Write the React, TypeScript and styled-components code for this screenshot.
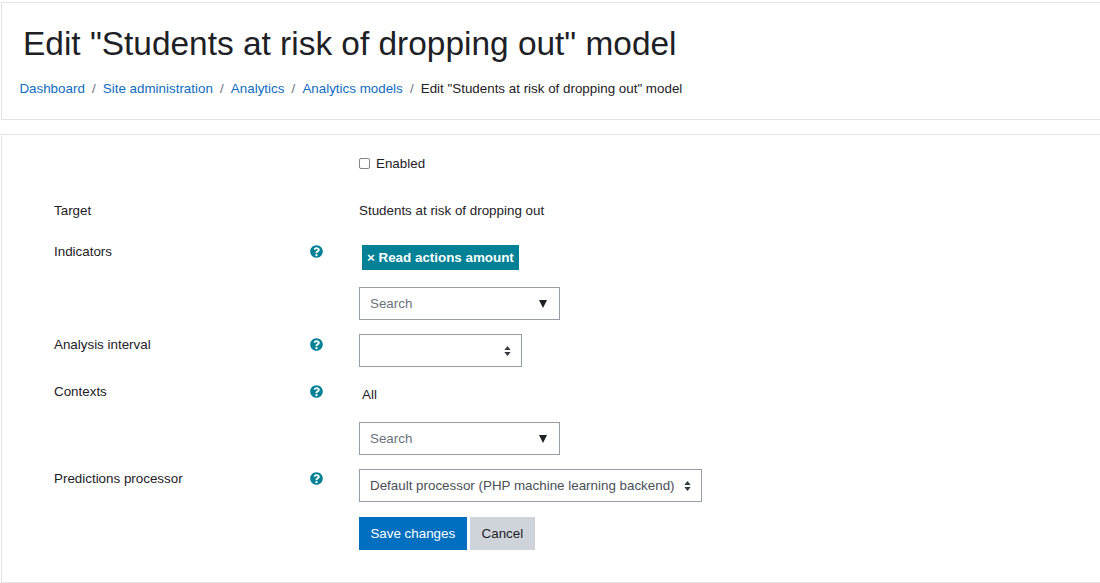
import styled, { createGlobalStyle } from "styled-components";

const Global = createGlobalStyle`
  html, body {
    margin: 0;
    padding: 0;
    background: #fff;
    overflow: hidden;
  }
  body {
    font-family: "Liberation Sans", Arial, sans-serif;
    font-size: 13.38px;
    line-height: 20px;
    color: #1d2125;
  }
`;

const Page = styled.div`
  width: 1100px;
  height: 583px;
  padding: 2px 0 0 1px;
  box-sizing: border-box;
  overflow: hidden;
`;

const Card = styled.section`
  width: 1110px;
  box-sizing: border-box;
  background: #fff;
  border: 1px solid #e3e3e3;
`;

const HeaderCard = styled(Card)`
  height: 118px;
  padding: 19px 0 0 17px;
  margin-bottom: 14px;
`;

const Title = styled.h1`
  margin: 0 0 0 4px;
  font-size: 33.44px;
  font-weight: 400;
  line-height: 44px;
  color: #1d2125;
`;

const Crumbs = styled.nav`
  display: flex;
  margin-top: 13px;
  padding-left: 0.4px;
  height: 20px;
  align-items: center;
`;

const Crumb = styled.a`
  color: #0f6cbf;
  text-decoration: none;
`;

const Sep = styled.span`
  color: #6a737b;
  padding: 0 7.15px;
`;

const FormCard = styled(Card)`
  height: 449px;
  padding: 13px 0 0 52px;
`;

const Row = styled.div<{ $height: number }>`
  display: grid;
  grid-template-columns: 256px 49px 1fr;
  height: ${(p) => p.$height}px;
`;

const Label = styled.label`
  padding-top: 3px;
  line-height: 20px;
`;

const HelpCell = styled.div`
  padding-top: 6px;
  height: 14px;
  line-height: 0;
`;

const Controls = styled.div<{ $top?: number }>`
  display: flex;
  flex-direction: column;
  align-items: flex-start;
  padding-top: ${(p) => p.$top ?? 0}px;
`;

const CheckLine = styled.label`
  display: flex;
  align-items: center;
  gap: 6px;
  height: 32px;
`;

const Check = styled.input`
  width: 9px;
  height: 9px;
  margin: -1px 0 0;
  appearance: none;
  background: #fff;
  border: 1px solid #858585;
  border-radius: 2px;
  box-sizing: content-box;
`;

const Plain = styled.div`
  padding-top: 3px;
`;

const Chip = styled.span`
  display: inline-flex;
  align-items: center;
  height: 25px;
  margin: 6px 0 17px 3px;
  padding: 0 5px;
  background: #008196;
  color: #fff;
  font-weight: 700;
`;

const AllText = styled.div`
  height: 20px;
  margin: 6px 0 17px 3px;
`;

const Box = styled.div<{ $width: number }>`
  display: flex;
  align-items: center;
  justify-content: space-between;
  width: ${(p) => p.$width}px;
  height: 33px;
  box-sizing: border-box;
  padding: 0 10px;
  background: #fff;
  border: 1px solid #979da6;
  color: #495057;
`;

const Placeholder = styled.span`
  color: #6a737b;
`;

const DownArrow = styled.span`
  width: 0;
  height: 0;
  margin-right: 2px;
  border-left: 4px solid transparent;
  border-right: 4px solid transparent;
  border-top: 8px solid #1d2125;
`;

const Buttons = styled.div`
  display: flex;
  gap: 3px;
  padding-top: 2px;
`;

const Button = styled.button<{ $primary?: boolean }>`
  height: 33px;
  padding: 0 12px 0 11.4px;
  border: 0;
  font: inherit;
  background: ${(p) => (p.$primary ? "#006fbf" : "#ced4da")};
  color: ${(p) => (p.$primary ? "#fff" : "#1d2125")};
`;

const Help = () => (
  <svg width="13" height="13" viewBox="0 0 512 512" fill="#008196">
    <path d="M504 256c0 137-111 248-248 248S8 393 8 256 119 8 256 8s248 111 248 248zM263 90c-54 0-89 23-116 63-4 5-3 12 3 16l35 26c5 4 13 3 17-2 18-23 30-36 58-36 21 0 47 14 47 34 0 15-13 23-34 35-24 14-57 31-57 75v7c0 7 5 12 12 12h56c7 0 12-5 12-12v-4c0-31 90-32 90-115 0-62-65-99-123-99zm-7 266c-24 0-44 20-44 44s20 44 44 44 44-20 44-44-20-44-44-44z" />
  </svg>
);

const Updown = () => (
  <svg width="7" height="10" viewBox="0 0 7 11" fill="#343a40">
    <path d="M3.5 0 7 4.4H0zM3.5 11 0 6.6h7z" />
  </svg>
);

function App() {
  return (
    <Page>
      <Global />
      <HeaderCard>
        <Title>Edit "Students at risk of dropping out" model</Title>
        <Crumbs>
          <Crumb href="#">Dashboard</Crumb>
          <Sep>/</Sep>
          <Crumb href="#">Site administration</Crumb>
          <Sep>/</Sep>
          <Crumb href="#">Analytics</Crumb>
          <Sep>/</Sep>
          <Crumb href="#">Analytics models</Crumb>
          <Sep>/</Sep>
          <span>Edit "Students at risk of dropping out" model</span>
        </Crumbs>
      </HeaderCard>
      <FormCard>
        <Row $height={50}>
          <span />
          <span />
          <Controls>
            <CheckLine>
              <Check type="checkbox" />
              Enabled
            </CheckLine>
          </Controls>
        </Row>
        <Row $height={41}>
          <Label>Target</Label>
          <span />
          <Plain>Students at risk of dropping out</Plain>
        </Row>
        <Row $height={93}>
          <Label>Indicators</Label>
          <HelpCell>
            <Help />
          </HelpCell>
          <Controls>
            <Chip>× Read actions amount</Chip>
            <Box $width={201}>
              <Placeholder>Search</Placeholder>
              <DownArrow />
            </Box>
          </Controls>
        </Row>
        <Row $height={47}>
          <Label>Analysis interval</Label>
          <HelpCell>
            <Help />
          </HelpCell>
          <Controls $top={2}>
            <Box $width={163}>
              <span />
              <Updown />
            </Box>
          </Controls>
        </Row>
        <Row $height={87}>
          <Label>Contexts</Label>
          <HelpCell>
            <Help />
          </HelpCell>
          <Controls>
            <AllText>All</AllText>
            <Box $width={201}>
              <Placeholder>Search</Placeholder>
              <DownArrow />
            </Box>
          </Controls>
        </Row>
        <Row $height={49}>
          <Label>Predictions processor</Label>
          <HelpCell>
            <Help />
          </HelpCell>
          <Controls $top={3}>
            <Box $width={343}>
              <span>Default processor (PHP machine learning backend)</span>
              <Updown />
            </Box>
          </Controls>
        </Row>
        <Row $height={40}>
          <span />
          <span />
          <Buttons>
            <Button $primary>Save changes</Button>
            <Button>Cancel</Button>
          </Buttons>
        </Row>
      </FormCard>
    </Page>
  );
}

export default App;
